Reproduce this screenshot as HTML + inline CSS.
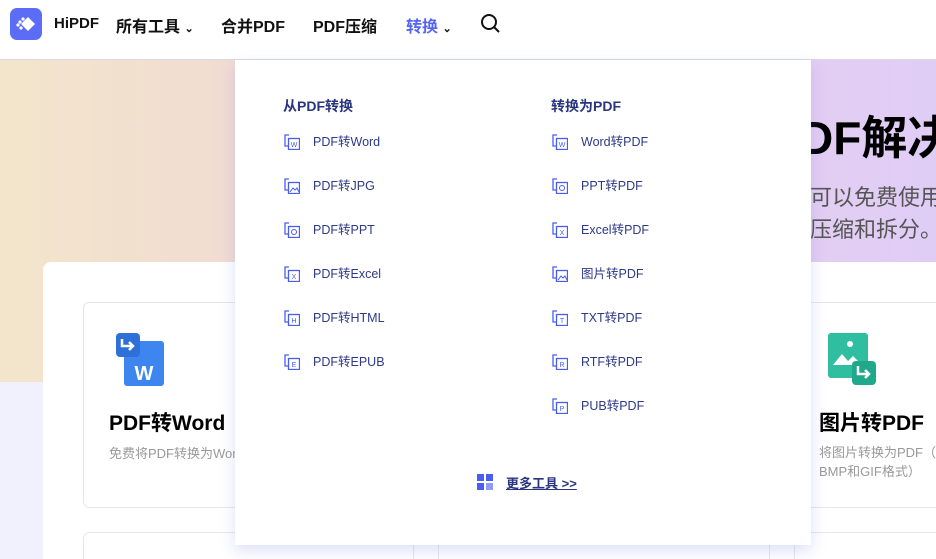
<!DOCTYPE html>
<html><head><meta charset="utf-8"><style>
*{margin:0;padding:0;box-sizing:border-box}
html{overflow:hidden;width:936px;height:559px}
body{width:936px;height:559px;overflow:hidden;position:relative;background:#f1f1fd;font-family:"Liberation Sans","Noto Sans CJK SC",sans-serif}
.hdr{position:absolute;left:0;top:0;width:936px;height:60px;background:#fff;border-bottom:1px solid #d8d8e0}
.logo{position:absolute;left:10px;top:8px;width:32px;height:32px;border-radius:7px;background:#5b6df7}
.nav{position:absolute;top:13px;font-size:16px;font-weight:bold;color:#111}
.hero{position:absolute;left:0;top:60px;width:936px;height:322px;background:linear-gradient(90deg,#f3e5cc 0%,#f1d8d4 35%,#e6cdef 75%,#e0cdf6 100%)}
.big{position:absolute;left:43px;top:262px;width:920px;height:297px;background:#fff;border-radius:8px 8px 0 0}
.card{position:absolute;border:1px solid #e6e6ea;border-radius:6px;background:#fff}
.dd{position:absolute;left:235px;top:60px;width:576px;height:485px;background:#fff;box-shadow:0 6px 14px rgba(120,130,230,.25)}
.h{position:absolute;top:36px;font-size:14px;font-weight:bold;color:#2a3580}
.it{position:absolute;font-size:12.5px;color:#2e3a86;height:16px;line-height:16px}
.it svg{position:absolute;left:-29px;top:0}
.it span{position:absolute;left:0;top:0;white-space:nowrap}
</style></head><body>
<div class="hdr">
<div class="logo"><svg width="32" height="32"><path d="M18 9l7 7-7 7-7-7z" fill="#fff"/><circle cx="10" cy="14" r="1.6" fill="#fff"/><circle cx="13" cy="11" r="1.6" fill="#fff"/><circle cx="8" cy="17" r="1.6" fill="#fff"/><circle cx="11" cy="20" r="1.6" fill="#fff"/></svg></div>
<div class="nav" style="left:54px;font-size:15px;top:15px">HiPDF</div>
<div class="nav" style="left:116px">所有工具 <span style="font-size:11px">&#8964;</span></div>
<div class="nav" style="left:221px">合并PDF</div>
<div class="nav" style="left:313px">PDF压缩</div>
<div class="nav" style="left:406px;color:#5465f0">转换 <span style="font-size:11px;color:#111">&#8964;</span></div>
<svg style="position:absolute;left:480px;top:13px" width="20" height="20"><circle cx="9" cy="9" r="7" fill="none" stroke="#111" stroke-width="2"/><path d="M14 14l5 5" stroke="#111" stroke-width="2"/></svg>
</div>
<div class="hero">
<div style="position:absolute;left:800px;top:42px;font-size:46px;font-weight:bold;color:#000;white-space:nowrap">DF解决</div>
<div style="position:absolute;left:810px;top:122px;font-size:22px;color:#555;white-space:nowrap;line-height:32px">可以免费使用<br>压缩和拆分。</div>
</div>
<div class="big"></div>
<div class="card" style="left:83px;top:302px;width:331px;height:206px">
<svg style="position:absolute;left:32px;top:30px" width="50" height="54"><rect x="8" y="8" width="40" height="45" rx="3" fill="#3d86ef"/><rect x="0" y="0" width="24" height="24" rx="4" fill="#2f6fd8"/><path d="M6 6v7h11M13 9l4 4-4 4" stroke="#fff" stroke-width="2.5" fill="none"/><text x="28" y="47" font-size="20" font-weight="bold" fill="#fff" text-anchor="middle" font-family="Liberation Sans">W</text></svg>
<div style="position:absolute;left:25px;top:104px;font-size:21px;font-weight:bold;color:#000">PDF转Word</div>
<div style="position:absolute;left:25px;top:140px;font-size:13px;color:#999;white-space:nowrap">免费将PDF转换为Word</div>
</div>
<div class="card" style="left:794px;top:302px;width:200px;height:206px">
<svg style="position:absolute;left:33px;top:30px" width="50" height="54"><rect x="0" y="0" width="40" height="45" rx="3" fill="#2fbfa0"/><path d="M5 32l9-11 6 7 5-5 9 9z" fill="#fff"/><circle cx="22" cy="11" r="3" fill="#fff"/><rect x="24" y="28" width="24" height="24" rx="4" fill="#1fa889"/><path d="M30 33v8h11M37 37l4 4-4 4" stroke="#fff" stroke-width="2.5" fill="none"/></svg>
<div style="position:absolute;left:24px;top:104px;font-size:21px;font-weight:bold;color:#000;white-space:nowrap">图片转PDF</div>
<div style="position:absolute;left:24px;top:140px;font-size:13px;color:#999;white-space:nowrap;line-height:19px">将图片转换为PDF（<br>BMP和GIF格式）</div>
</div>
<div class="card" style="left:83px;top:532px;width:331px;height:40px"></div>
<div class="card" style="left:438px;top:532px;width:332px;height:40px"></div>
<div class="card" style="left:794px;top:532px;width:200px;height:40px"></div>
<div class="dd">
<div class="h" style="left:48px">从PDF转换</div>
<div class="h" style="left:316px">转换为PDF</div>
<div class="it" style="left:78px;top:74px"><svg width="16" height="16"><path d="M5 1H1v11h4" fill="none" stroke="#4a5df2" stroke-width="1.3"/><rect x="4.5" y="4.5" width="11" height="11" fill="#fff" stroke="#4a5df2" stroke-width="1.3"/><text x="10" y="13" font-size="7" text-anchor="middle" fill="#4a5df2">W</text></svg><span>PDF转Word</span></div>
<div class="it" style="left:78px;top:118px"><svg width="16" height="16"><path d="M5 1H1v11h4" fill="none" stroke="#4a5df2" stroke-width="1.3"/><rect x="4.5" y="4.5" width="11" height="11" fill="#fff" stroke="#4a5df2" stroke-width="1.3"/><path d="M6 14l3-4 2 2 2-2 2 4" fill="none" stroke="#4a5df2"/></svg><span>PDF转JPG</span></div>
<div class="it" style="left:78px;top:162px"><svg width="16" height="16"><path d="M5 1H1v11h4" fill="none" stroke="#4a5df2" stroke-width="1.3"/><rect x="4.5" y="4.5" width="11" height="11" fill="#fff" stroke="#4a5df2" stroke-width="1.3"/><circle cx="10" cy="10" r="2.5" fill="none" stroke="#4a5df2"/></svg><span>PDF转PPT</span></div>
<div class="it" style="left:78px;top:206px"><svg width="16" height="16"><path d="M5 1H1v11h4" fill="none" stroke="#4a5df2" stroke-width="1.3"/><rect x="4.5" y="4.5" width="11" height="11" fill="#fff" stroke="#4a5df2" stroke-width="1.3"/><text x="10" y="13" font-size="7" text-anchor="middle" fill="#4a5df2">X</text></svg><span>PDF转Excel</span></div>
<div class="it" style="left:78px;top:250px"><svg width="16" height="16"><path d="M5 1H1v11h4" fill="none" stroke="#4a5df2" stroke-width="1.3"/><rect x="4.5" y="4.5" width="11" height="11" fill="#fff" stroke="#4a5df2" stroke-width="1.3"/><text x="10" y="13" font-size="7" text-anchor="middle" fill="#4a5df2">H</text></svg><span>PDF转HTML</span></div>
<div class="it" style="left:78px;top:294px"><svg width="16" height="16"><path d="M5 1H1v11h4" fill="none" stroke="#4a5df2" stroke-width="1.3"/><rect x="4.5" y="4.5" width="11" height="11" fill="#fff" stroke="#4a5df2" stroke-width="1.3"/><text x="10" y="13" font-size="7" text-anchor="middle" fill="#4a5df2">E</text></svg><span>PDF转EPUB</span></div>
<div class="it" style="left:346px;top:74px"><svg width="16" height="16"><path d="M5 1H1v11h4" fill="none" stroke="#4a5df2" stroke-width="1.3"/><rect x="4.5" y="4.5" width="11" height="11" fill="#fff" stroke="#4a5df2" stroke-width="1.3"/><text x="10" y="13" font-size="7" text-anchor="middle" fill="#4a5df2">W</text></svg><span>Word转PDF</span></div>
<div class="it" style="left:346px;top:118px"><svg width="16" height="16"><path d="M5 1H1v11h4" fill="none" stroke="#4a5df2" stroke-width="1.3"/><rect x="4.5" y="4.5" width="11" height="11" fill="#fff" stroke="#4a5df2" stroke-width="1.3"/><circle cx="10" cy="10" r="2.5" fill="none" stroke="#4a5df2"/></svg><span>PPT转PDF</span></div>
<div class="it" style="left:346px;top:162px"><svg width="16" height="16"><path d="M5 1H1v11h4" fill="none" stroke="#4a5df2" stroke-width="1.3"/><rect x="4.5" y="4.5" width="11" height="11" fill="#fff" stroke="#4a5df2" stroke-width="1.3"/><text x="10" y="13" font-size="7" text-anchor="middle" fill="#4a5df2">X</text></svg><span>Excel转PDF</span></div>
<div class="it" style="left:346px;top:206px"><svg width="16" height="16"><path d="M5 1H1v11h4" fill="none" stroke="#4a5df2" stroke-width="1.3"/><rect x="4.5" y="4.5" width="11" height="11" fill="#fff" stroke="#4a5df2" stroke-width="1.3"/><path d="M6 14l3-4 2 2 2-2 2 4" fill="none" stroke="#4a5df2"/></svg><span>图片转PDF</span></div>
<div class="it" style="left:346px;top:250px"><svg width="16" height="16"><path d="M5 1H1v11h4" fill="none" stroke="#4a5df2" stroke-width="1.3"/><rect x="4.5" y="4.5" width="11" height="11" fill="#fff" stroke="#4a5df2" stroke-width="1.3"/><text x="10" y="13" font-size="7" text-anchor="middle" fill="#4a5df2">T</text></svg><span>TXT转PDF</span></div>
<div class="it" style="left:346px;top:294px"><svg width="16" height="16"><path d="M5 1H1v11h4" fill="none" stroke="#4a5df2" stroke-width="1.3"/><rect x="4.5" y="4.5" width="11" height="11" fill="#fff" stroke="#4a5df2" stroke-width="1.3"/><text x="10" y="13" font-size="7" text-anchor="middle" fill="#4a5df2">R</text></svg><span>RTF转PDF</span></div>
<div class="it" style="left:346px;top:338px"><svg width="16" height="16"><path d="M5 1H1v11h4" fill="none" stroke="#4a5df2" stroke-width="1.3"/><rect x="4.5" y="4.5" width="11" height="11" fill="#fff" stroke="#4a5df2" stroke-width="1.3"/><text x="10" y="13" font-size="7" text-anchor="middle" fill="#4a5df2">P</text></svg><span>PUB转PDF</span></div>
<svg style="position:absolute;left:242px;top:414px" width="16" height="16"><rect x="0" y="0" width="7" height="7" fill="#4a5df2"/><rect x="9" y="0" width="7" height="7" fill="#4a5df2"/><rect x="0" y="9" width="7" height="7" fill="#4a5df2"/><rect x="9" y="9" width="7" height="7" fill="#8f9cf7"/></svg>
<div style="position:absolute;left:271px;top:413px;font-size:13px;font-weight:bold;color:#2a3580;text-decoration:underline">更多工具 &gt;&gt;</div>
</div>
</body></html>
